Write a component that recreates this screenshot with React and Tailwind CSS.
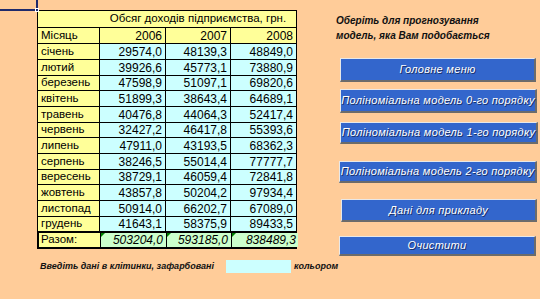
import React from 'react'

const months = [
    ['січень', '29574,0', '48139,3', '48849,0', 'h-[16px]'],
    ['лютий', '39926,6', '45773,1', '73880,9', 'h-[16px]'],
    ['березень', '47598,9', '51097,1', '69820,6', 'h-[15px]'],
    ['квітень', '51899,3', '38643,4', '64689,1', 'h-[16px]'],
    ['травень', '40476,8', '44064,3', '52417,4', 'h-[16px]'],
    ['червень', '32427,2', '46417,8', '55393,6', 'h-[15px]'],
    ['липень', '47911,0', '43193,5', '68362,3', 'h-[16px]'],
    ['серпень', '38246,5', '55014,4', '77777,7', 'h-[16px]'],
    ['вересень', '38729,1', '46059,4', '72841,8', 'h-[15px]'],
    ['жовтень', '43857,8', '50204,2', '97934,4', 'h-[16px]'],
    ['листопад', '50914,0', '66202,7', '67089,0', 'h-[16px]'],
    ['грудень', '41643,1', '58375,9', '89433,5', 'h-[15px]'],
]

const buttons = [
    { label: 'Головне меню', cls: 'mt-[15px] h-[24px] w-[196px]' },
    { label: 'Поліноміальна модель 0-го порядку', cls: 'mt-[7px] h-[24px] w-[197px]' },
    { label: 'Поліноміальна модель 1-го порядку', cls: 'mt-[9px] h-[22px] w-[198px]' },
    { label: 'Поліноміальна модель 2-го порядку', cls: 'mt-[17px] h-[22px] w-[198px] -ml-[1px]' },
    { label: 'Дані для прикладу', cls: 'mt-[16px] h-[23px] w-[196px] ml-[1px]' },
    { label: 'Очистити', cls: 'mt-[14px] h-[20px] w-[197px] -ml-[1px]' },
]

const cell = 'flex items-center overflow-hidden border-r border-b border-black'
const word = 'pl-[3px] text-[11.5px]'
const num = 'justify-end pr-[3px]'

const Flag = () => (
    <span className='absolute left-0 top-0 w-0 h-0 border-t-[4px] border-r-[4px] border-t-[#008000] border-r-transparent' />
)

const App = () => {
    return (
        <div className='relative w-[540px] h-[299px] overflow-hidden bg-[#FFCC99] flex text-[12px] text-black' style={{ fontFamily: '"Liberation Sans", Arial, sans-serif' }}>

            {/* selected cell A1 */}
            <div className='absolute left-0 top-0 w-[38px] h-[11px] border-r-2 border-b-2 border-[#1f2a6b]'>
                <span className='absolute -right-[3px] -bottom-[3px] w-[4px] h-[4px] bg-[#1f2a6b] border border-white' />
            </div>

            <div className='w-[336px] shrink-0 pl-[37px] pt-[10px] flex flex-col'>
                <div className='w-[260px] border-l border-t border-black bg-[#FFFF99] leading-none'>
                    <div className='flex h-[17px] border-b border-r border-black'>
                        <div className='w-[62px]' />
                        <div className='flex-1 flex items-center justify-center text-[11.5px]'>Обсяг доходів підприємства, грн.</div>
                    </div>
                    <div className='grid grid-cols-[62px_66px_65px_66px] h-[16px]'>
                        <div className={`${cell} ${word}`}>Місяць</div>
                        <div className={`${cell} ${num}`}>2006</div>
                        <div className={`${cell} ${num}`}>2007</div>
                        <div className={`${cell} ${num}`}>2008</div>
                    </div>
                    {months.map((m) => (
                        <div key={m[0]} className={`grid grid-cols-[62px_66px_65px_66px] ${m[4]}`}>
                            <div className={`${cell} ${word} bg-[#FFFF99]`}>{m[0]}</div>
                            <div className={`${cell} ${num} bg-[#CCFFFF]`}>{m[1]}</div>
                            <div className={`${cell} ${num} bg-[#CCFFFF]`}>{m[2]}</div>
                            <div className={`${cell} ${num} bg-[#CCFFFF]`}>{m[3]}</div>
                        </div>
                    ))}
                </div>
                <div className='w-[260px] grid grid-cols-[62px_66px_65px_66px] h-[18px] border-2 border-black -mt-[1px] leading-none'>
                    <div className='flex items-center border-r border-black pl-[2px] bg-[#FFFF99] text-[11.5px]'>Разом:</div>
                    <div className='relative flex items-center justify-end border-r border-black pr-[3px] bg-[#CCFFCC] italic'><Flag />503204,0</div>
                    <div className='relative flex items-center justify-end border-r border-black pr-[3px] bg-[#CCFFCC] italic'><Flag />593185,0</div>
                    <div className='relative flex items-center justify-end pr-[2px] bg-[#CCFFCC] italic'><Flag />838489,3</div>
                </div>

                <div className='flex items-center mt-[11px] h-[13px] pl-[3px] whitespace-nowrap text-[9px] italic font-bold text-[#111]'>
                    <span className='shrink-0'>Введіть дані в клітинки, зафарбовані</span>
                    <span className='shrink-0 w-[65px] h-[13px] bg-[#CCFFFF] ml-[12px] mr-[3px]' />
                    <span className='shrink-0'>кольором</span>
                </div>
            </div>

            <div className='flex flex-col pt-[13px]'>
                <div className='text-[10px] italic font-bold leading-[15px] text-[#111] whitespace-nowrap'>
                    <p>Оберіть для прогнозування</p>
                    <p>модель, яка Вам подобається</p>
                </div>
                <div className='flex flex-col pl-[4px]'>
                    {buttons.map((b) => (
                        <button key={b.label} className={`${b.cls} bg-[#3366CC] border-t border-l border-t-[#e8e8e8] border-l-[#e8e8e8] border-b-2 border-r-2 border-b-[#6b6b6b] border-r-[#6b6b6b] text-white italic text-[11px] tracking-[0.3px] whitespace-nowrap flex items-center justify-center [text-shadow:1px_1px_0_#1a2f66]`}>
                            {b.label}
                        </button>
                    ))}
                </div>
            </div>
        </div>
    )
}

export default App
